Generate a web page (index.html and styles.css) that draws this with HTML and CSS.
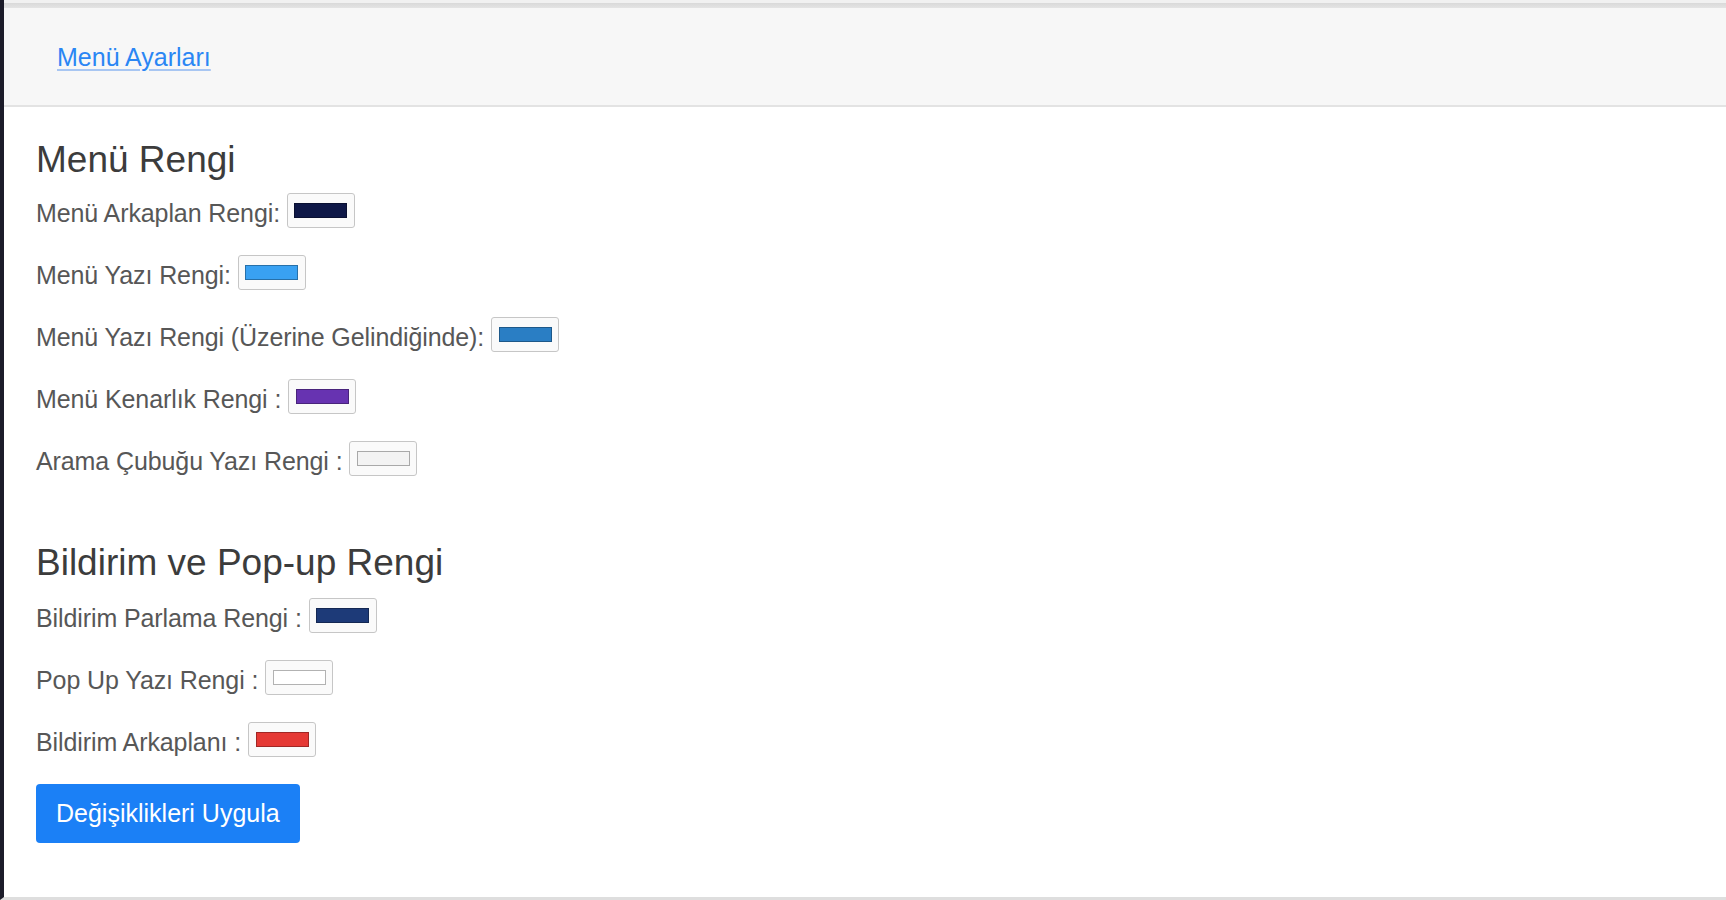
FILE: index.html
```html
<!DOCTYPE html>
<html lang="tr">
<head>
<meta charset="utf-8">
<title>Menü Ayarları</title>
<link rel="stylesheet" href="styles.css">
</head>
<body>
<div class="frame">
  <div class="topbar"></div>
  <header class="tabs">
    <a href="#" class="tab-link">Menü Ayarları</a>
  </header>
  <main class="content">
    <section class="group">
      <h2 class="group-title">Menü Rengi</h2>
      <div class="field">
        <label class="field-label">Menü Arkaplan Rengi:</label>
        <span class="swatch"><span class="swatch-color c-navy"></span></span>
      </div>
      <div class="field">
        <label class="field-label">Menü Yazı Rengi:</label>
        <span class="swatch"><span class="swatch-color c-sky"></span></span>
      </div>
      <div class="field">
        <label class="field-label">Menü Yazı Rengi (Üzerine Gelindiğinde):</label>
        <span class="swatch"><span class="swatch-color c-blue"></span></span>
      </div>
      <div class="field">
        <label class="field-label">Menü Kenarlık Rengi :</label>
        <span class="swatch"><span class="swatch-color c-purple"></span></span>
      </div>
      <div class="field">
        <label class="field-label">Arama Çubuğu Yazı Rengi :</label>
        <span class="swatch"><span class="swatch-color c-light"></span></span>
      </div>
    </section>
    <section class="group group-second">
      <h2 class="group-title">Bildirim ve Pop-up Rengi</h2>
      <div class="field">
        <label class="field-label">Bildirim Parlama Rengi :</label>
        <span class="swatch"><span class="swatch-color c-deep"></span></span>
      </div>
      <div class="field">
        <label class="field-label">Pop Up Yazı Rengi :</label>
        <span class="swatch"><span class="swatch-color c-white"></span></span>
      </div>
      <div class="field">
        <label class="field-label">Bildirim Arkaplanı :</label>
        <span class="swatch"><span class="swatch-color c-red"></span></span>
      </div>
      <button type="button" class="apply">Değişiklikleri Uygula</button>
    </section>
  </main>
</div>
</body>
</html>
```
FILE: styles.css
```css
html, body {
  margin: 0;
  padding: 0;
  background: #ffffff;
}

body {
  font-family: "Liberation Sans", Arial, sans-serif;
}

.frame {
  height: 900px;
  box-sizing: border-box;
  border-left: 4px solid #1c1c2a;
  border-bottom: 3px solid #dedede;
  display: flex;
  flex-direction: column;
}

.topbar {
  height: 8px;
  flex: none;
  background: linear-gradient(#f1f1f1 0, #f1f1f1 3px, #d9d9d9 3px, #e4e4e4 8px);
}

.tabs {
  flex: none;
  height: 99px;
  box-sizing: border-box;
  background: #f7f7f7;
  border-bottom: 2px solid #e3e3e3;
  padding: 34px 0 0 53px;
}

.tab-link {
  font-size: 25px;
  line-height: 30px;
  color: #2a86f4;
  text-decoration: underline;
  text-decoration-color: #a8c6f2;
  text-decoration-thickness: 2px;
  text-underline-offset: 3px;
}

.content {
  flex: 1;
  padding: 31px 0 0 32px;
}

.group-title {
  margin: 0 0 11px;
  font-size: 37px;
  line-height: 44px;
  font-weight: 400;
  color: #3c3c3c;
}

.group-second {
  margin-top: 65px;
}

.group-second .group-title {
  margin-bottom: 13px;
}

.field {
  display: flex;
  align-items: flex-end;
  gap: 7px;
  height: 35px;
  margin-bottom: 27px;
}

.field-label {
  font-size: 25px;
  line-height: 30px;
  letter-spacing: -0.1px;
  color: #575757;
}

.swatch {
  width: 68px;
  height: 35px;
  box-sizing: border-box;
  border: 1px solid #c6c6c6;
  border-radius: 3px;
  background: #fafafa;
  display: flex;
  align-items: center;
  justify-content: center;
}

.swatch-color {
  width: 53px;
  height: 15px;
  box-sizing: border-box;
  border: 1px solid rgba(0, 0, 0, 0.3);
}

.c-navy { background: #0f1847; }
.c-sky { background: #39a1f2; }
.c-blue { background: #2a7ec4; }
.c-purple { background: #6733b1; }
.c-light { background: #f3f3f3; }
.c-deep { background: #1d3a78; }
.c-white { background: #ffffff; }
.c-red { background: #e53935; }

.apply {
  display: block;
  margin-top: 1px;
  font-family: inherit;
  font-size: 25px;
  line-height: 29px;
  padding: 15px 20px;
  color: #ffffff;
  background: #1b80f6;
  border: none;
  border-radius: 4px;
  cursor: pointer;
}
```
